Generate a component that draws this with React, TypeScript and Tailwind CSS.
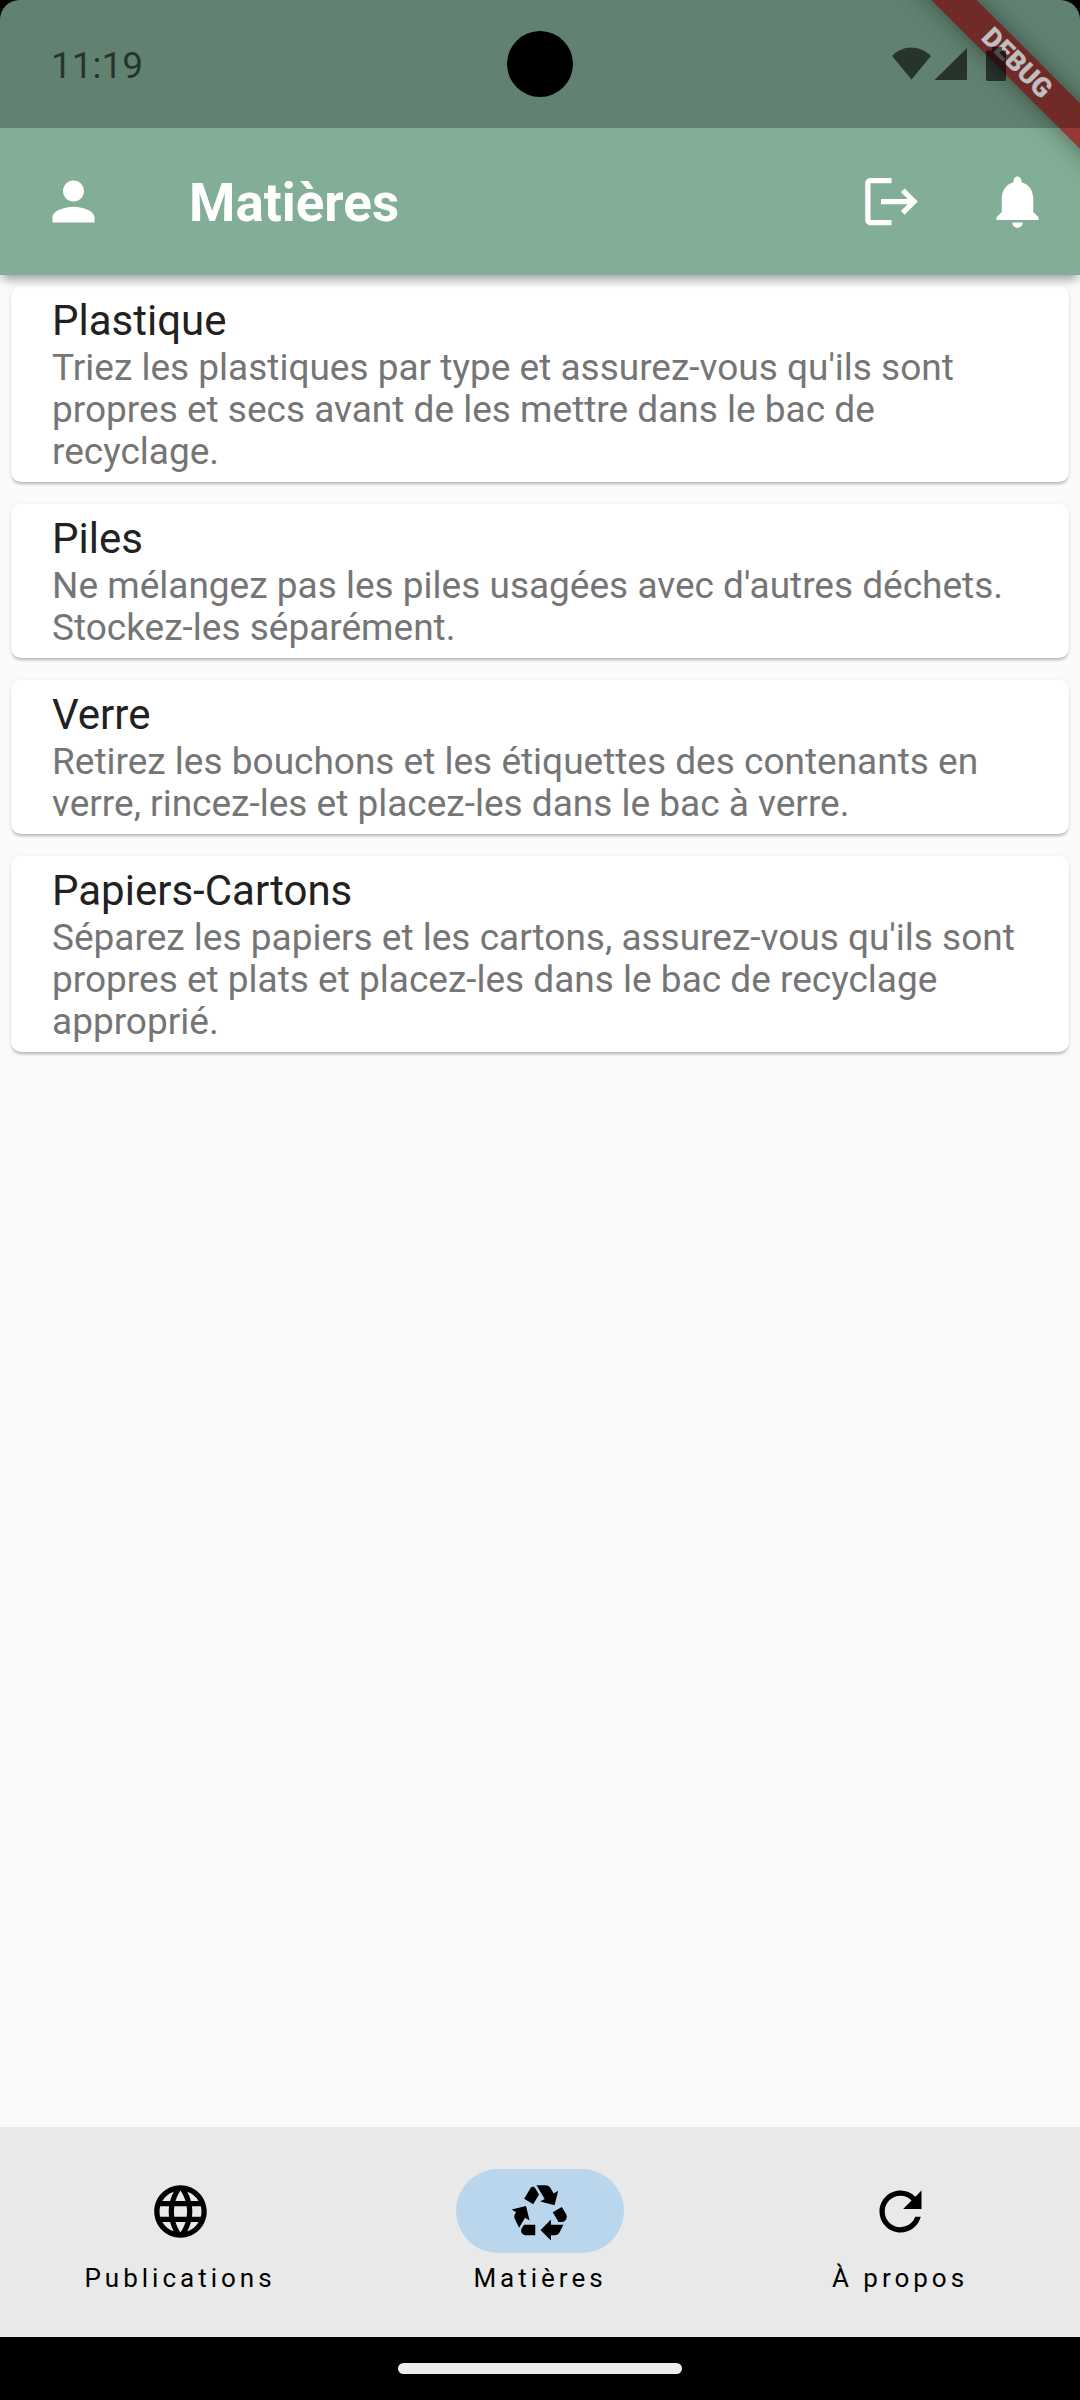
import { useState } from "react";
import {
  MdLanguage,
  MdLogout,
  MdNotifications,
  MdPerson,
  MdRecycling,
  MdRefresh,
} from "react-icons/md";

const materials = [
  {
    title: "Plastique",
    text: "Triez les plastiques par type et assurez-vous qu'ils sont propres et secs avant de les mettre dans le bac de recyclage.",
  },
  {
    title: "Piles",
    text: "Ne mélangez pas les piles usagées avec d'autres déchets. Stockez-les séparément.",
  },
  {
    title: "Verre",
    text: "Retirez les bouchons et les étiquettes des contenants en verre, rincez-les et placez-les dans le bac à verre.",
  },
  {
    title: "Papiers-Cartons",
    text: "Séparez les papiers et les cartons, assurez-vous qu'ils sont propres et plats et placez-les dans le bac de recyclage approprié.",
  },
];

const tabs = [
  { label: "Publications", Icon: MdLanguage },
  { label: "Matières", Icon: MdRecycling },
  { label: "À propos", Icon: MdRefresh },
];

function StatusBar() {
  return (
    <div className="relative z-10 grid h-32 grid-cols-3 items-center bg-black/25 text-black/60">
      <span className="pt-1 pl-[51px] text-[37px] leading-[44px]">11:19</span>
      <span className="size-[66px] justify-self-center rounded-full bg-black" />
      <svg
        className="mr-[73px] h-[36px] w-[116px] justify-self-end"
        viewBox="0 0 116 36"
        fill="currentColor"
        aria-hidden="true"
      >
        <path d="M1 10C12 -1.500 28 -1.500 40 10L20.500 33.500Z" />
        <path d="M76 2V34H43.500Z" />
        <path d="M96 4.500h5V1h10v3.500h4V34a1 1 0 0 1-1 1H96.500a1.500 1.500 0 0 1-1.500-1.500V5.500a1 1 0 0 1 1-1z" />
      </svg>
    </div>
  );
}

function DebugBanner() {
  return (
    <div className="pointer-events-none absolute top-0 right-0 size-[240px] overflow-hidden">
      <div className="absolute top-[47px] right-[-87px] flex h-8 w-[300px] rotate-45 items-center justify-center bg-[#963836] text-[27px] leading-8 font-black text-white shadow-[0_0_24px_rgba(0,0,0,0.4)]">
        DEBUG
      </div>
    </div>
  );
}

export default function App() {
  const [current, setCurrent] = useState("Matières");

  return (
    <div className="flex min-h-screen flex-col bg-[#fafafa] font-[Roboto,sans-serif]">
      <div className="bg-black">
        <header className="relative rounded-t-[20px] bg-[#82ae97] text-white shadow-[0_7px_10px_-3px_rgba(0,0,0,0.28),0_5px_12px_rgba(0,0,0,0.1)]">
          <div className="absolute inset-0 overflow-hidden rounded-t-[20px]">
            <DebugBanner />
          </div>
          <div className="overflow-hidden rounded-t-[20px]">
            <StatusBar />
          </div>
          <div className="relative flex h-[147px] items-center">
            <button className="flex size-[147px] items-center justify-center" aria-label="Profil">
              <MdPerson className="size-[63px]" />
            </button>
            <h1 className="flex-1 pt-0.5 pl-[42px] text-[53px] leading-[62px] font-bold">Matières</h1>
            <button className="flex size-[126px] items-center justify-center" aria-label="Déconnexion">
              <MdLogout className="size-[63px]" />
            </button>
            <button className="flex size-[126px] items-center justify-center" aria-label="Notifications">
              <MdNotifications className="size-[63px]" />
            </button>
          </div>
        </header>
      </div>

      <main className="flex flex-1 flex-col gap-[22px] px-[11px] pt-[11px]">
        {materials.map((item) => (
          <article
            key={item.title}
            className="rounded-[10px] bg-white px-[41px] pt-[10px] pb-[9px] shadow-[0_3px_3px_-1px_rgba(0,0,0,0.24),0_1px_4px_rgba(0,0,0,0.08)]"
          >
            <h2 className="mb-px text-[42px] leading-[50px] text-[#212121]">{item.title}</h2>
            <p className="text-[37px] leading-[42px] text-[#757575]">{item.text}</p>
          </article>
        ))}
      </main>

      <nav className="grid h-[210px] grid-cols-3 bg-[#e9e9e9] pt-[42px] text-black">
        {tabs.map(({ label, Icon }) => (
          <button
            key={label}
            onClick={() => setCurrent(label)}
            className="flex flex-col items-center gap-[10px]"
          >
            <span
              className={
                current === label
                  ? "flex h-[84px] w-[168px] items-center justify-center rounded-full bg-[#b9d6ec]"
                  : "flex h-[84px] w-[168px] items-center justify-center rounded-full"
              }
            >
              <Icon className="size-[63px]" />
            </span>
            <span className="text-[26px] leading-[31px] tracking-[4px]">{label}</span>
          </button>
        ))}
      </nav>

      <div className="flex h-[63px] items-center justify-center bg-black">
        <span className="h-[11px] w-[284px] rounded-full bg-[#ececec]" />
      </div>
    </div>
  );
}
